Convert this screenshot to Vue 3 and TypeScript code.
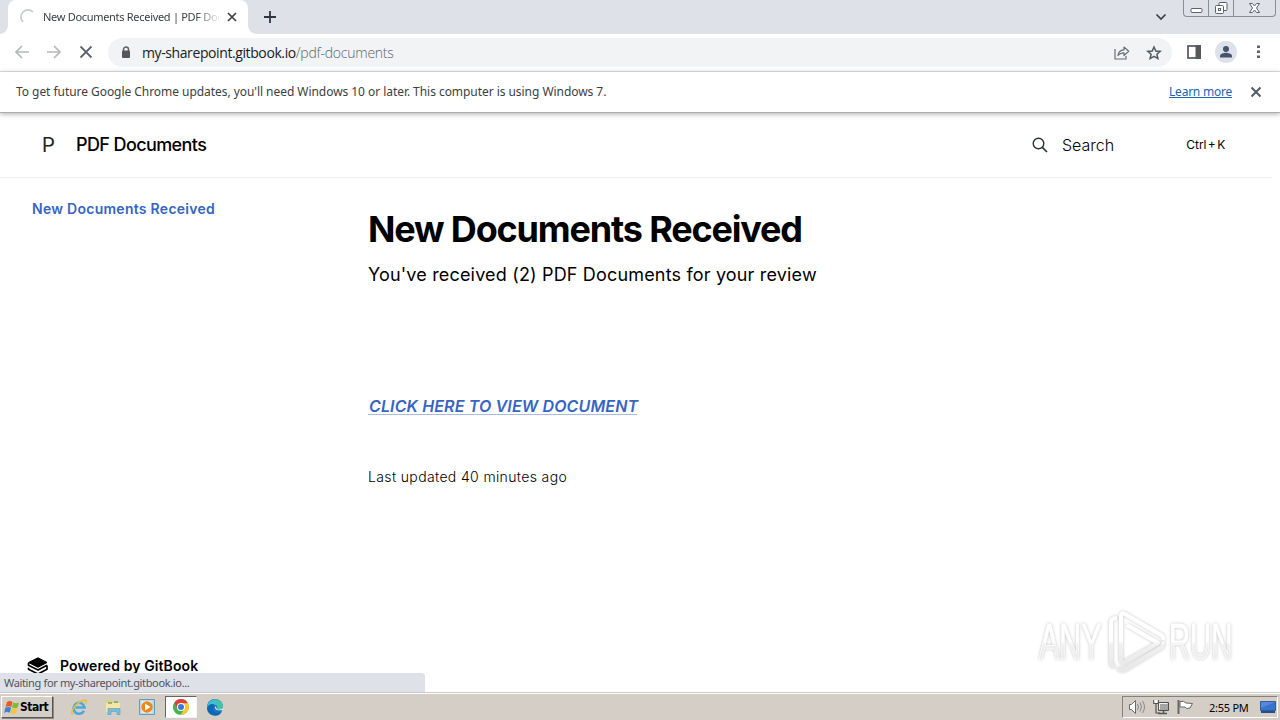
<script setup lang="ts">
interface Banner {
  message: string
  link: string
}

const tabTitle = 'New Documents Received | PDF Doc'
const banner: Banner = {
  message: "To get future Google Chrome updates, you'll need Windows 10 or later. This computer is using Windows 7.",
  link: 'Learn more',
}
const clock = '2:55 PM'
</script>

<template>
  <div class="screen">
    <header class="tabstrip">
      <div class="tab">
        <svg class="spinner" width="16" height="16" viewBox="0 0 16 16"><path d="M3 13A7 7 0 0 1 13 3" fill="none" stroke="#c3cbd8" stroke-width="1.7" /></svg>
        <span class="tab-title">{{ tabTitle }}</span>
        <svg width="10" height="10" viewBox="0 0 10 10"><path d="M1 1l8 8M9 1L1 9" stroke="#3c4043" stroke-width="1.7" /></svg>
        <i class="flare left"></i><i class="flare right"></i>
      </div>
      <svg class="plus" width="12" height="12" viewBox="0 0 12 12"><path d="M6 0v12M0 6h12" stroke="#303640" stroke-width="1.8" /></svg>
      <svg class="chevron" width="12" height="8" viewBox="0 0 12 8"><path d="M1.5 1.5L6 6l4.500-4.500" fill="none" stroke="#3c4043" stroke-width="1.7" /></svg>
      <div class="winbuttons">
        <span class="wb"><svg width="13" height="16" viewBox="0 0 13 16"><rect x="1" y="8.500" width="11" height="4" rx="1" fill="#fff" stroke="#5d6168" /></svg></span>
        <span class="wb"><svg width="15" height="16" viewBox="0 0 15 16"><rect x="5" y="2.500" width="8" height="8" rx="1" fill="#fff" stroke="#5d6168" /><rect x="1.500" y="5.500" width="8" height="8" rx="1" fill="#fff" stroke="#5d6168" /><rect x="4.500" y="8.500" width="2" height="2" fill="none" stroke="#5d6168" /></svg></span>
        <span class="wb wide"><svg width="13" height="16" viewBox="0 0 13 16"><path d="M1.500 3.500H4.500l2 2.500 2-2.500h3L8.500 8l3 4.500h-3L6.500 10l-2 2.500H1.500L4.500 8z" fill="#fff" stroke="#5d6168" /></svg></span>
      </div>
    </header>

    <div class="toolbar">
      <svg class="nav back" width="16" height="14" viewBox="0 0 16 14"><path d="M15 7H2M8 1L2 7l6 6" fill="none" stroke="#b6b8ba" stroke-width="1.7" /></svg>
      <svg class="nav fwd" width="16" height="14" viewBox="0 0 16 14"><path d="M1 7h13M8 1l6 6-6 6" fill="none" stroke="#b6b8ba" stroke-width="1.7" /></svg>
      <svg class="nav stop" width="14" height="14" viewBox="0 0 14 14"><path d="M1.500 1.500l11 11M12.500 1.500l-11 11" stroke="#5f6368" stroke-width="1.8" /></svg>
      <div class="omnibox">
        <svg class="lock" width="10" height="13" viewBox="0 0 10 13"><path d="M2.500 5.500V3.500a2.500 2.500 0 0 1 5 0v2" fill="none" stroke="#5f6368" stroke-width="1.500" /><rect x="1" y="4.500" width="8" height="7.500" rx="1" fill="#54585d" /></svg>
        <span class="url"><b>my-sharepoint.gitbook.io</b>/pdf-documents</span>
        <svg class="share" width="16" height="15" viewBox="0 0 16 15"><path d="M1 4v10h11v-3" fill="none" stroke="#6a6e73" stroke-width="1.200" /><path d="M4 10.500c.3-3.500 2.500-5.500 6-5.700V2l4.700 4.300L10 10.500V7.800c-2.500 0-4.500.8-6 2.700z" fill="none" stroke="#6a6e73" stroke-width="1.200" stroke-linejoin="round" /></svg>
        <svg class="star" width="16" height="16" viewBox="0 0 16 16"><path d="M8 2l1.800 4 4.400.4-3.300 2.900 1 4.300L8 11.400l-3.900 2.200 1-4.300-3.300-2.900L6.200 6z" fill="none" stroke="#54585d" stroke-width="1.500" /></svg>
      </div>
      <svg class="panel" width="14" height="14" viewBox="0 0 14 14"><rect x="1" y="1" width="12" height="12" fill="#fff" stroke="#55585c" stroke-width="1.700" /><path d="M8.500 0H14v14H8.500z" fill="#55585c" /></svg>
      <svg class="avatar" width="22" height="22" viewBox="0 0 22 22"><circle cx="11" cy="11" r="11" fill="#dde1e8" /><circle cx="11" cy="8" r="3" fill="#46536c" /><path d="M5 16.500v-1.800c0-2 4-3 6-3s6 1 6 3v1.800z" fill="#46536c" /></svg>
      <svg class="dots" width="3" height="14" viewBox="0 0 3 14"><path d="M0 .5h3v2.600H0zM0 5.500h3v2.600H0zM0 10.500h3v2.600H0z" fill="#5f6368" /></svg>
    </div>

    <div class="banner">
      <span class="banner-text">{{ banner.message }}</span>
      <a class="learn">{{ banner.link }}</a>
      <svg width="12" height="12" viewBox="0 0 12 12"><path d="M1.500 1.500l9 9M10.500 1.500l-9 9" stroke="#55595e" stroke-width="1.900" /></svg>
    </div>

    <main class="page">
      <div class="site-header">
        <span class="logo">P</span>
        <span class="site-title">PDF Documents</span>
        <div class="search">
          <svg width="16" height="16" viewBox="0 0 16 16"><circle cx="6.500" cy="6.500" r="5.300" fill="none" stroke="#2d3033" stroke-width="1.400" /><path d="M10.400 10.400L15 15" stroke="#2d3033" stroke-width="1.600" /></svg>
          <span class="search-label">Search</span>
          <kbd>Ctrl + K</kbd>
        </div>
      </div>
      <div class="columns">
        <nav class="sidebar">
          <a class="current">New Documents Received</a>
          <div class="powered">
            <svg width="22" height="18" viewBox="0 0 22 18"><path d="M1.500 5.500L11 .8l9 4.700L11 10.300z" fill="#000" stroke="#000" stroke-linejoin="round" /><path d="M1.500 6v2.300L11 13l9-4.700" fill="none" stroke="#000" stroke-width="1.700" stroke-linejoin="round" /><path d="M1.500 10.700v1.600L11 17l9-4.700V8.500" fill="none" stroke="#000" stroke-width="1.700" stroke-linejoin="round" /></svg>
            <span>Powered by GitBook</span>
          </div>
        </nav>
        <article class="doc">
          <h1>New Documents Received</h1>
          <p class="lead">You've received (2) PDF Documents for your review</p>
          <a class="cta">CLICK HERE TO VIEW DOCUMENT</a>
          <p class="updated">Last updated 40 minutes ago</p>
        </article>
      </div>
    </main>

    <footer class="taskbar">
      <div class="start">
        <svg width="16" height="15" viewBox="0 0 16 15"><path d="M3 2q3-1.800 5.500 0L7.300 7Q4.500 5.500 1.500 7z" fill="#e65a28" /><path d="M9.200 2.400q3 1.500 5.800 0l-1.300 5q-3 1.500-5.700 0z" fill="#7ebc37" /><path d="M1.300 7.700q3-1.400 5.800.1l-1.300 5q-3-1.500-5.600.1z" fill="#3b83cf" /><path d="M7.800 8.200q3 1.500 5.700.1l-1.300 4.900q-3 1.600-5.700 0z" fill="#f7c53b" /></svg>
        <span>Start</span>
      </div>
      <svg class="task" width="18" height="18" viewBox="0 0 18 18"><path d="M14 12.700A5.500 5.500 0 1 1 14.500 9.500H5.500" fill="none" stroke="#48a9df" stroke-width="2.600" /><path d="M3 16.500C-1 15 5 5.500 13 2.500c4-1.200 4 .7 2.500 3" fill="none" stroke="#e9bd36" stroke-width="1.500" /></svg>
      <svg class="task" width="18" height="18" viewBox="0 0 18 18"><path d="M2 2h5l1 2h7v10H2z" fill="#e8cf72" /><path d="M2 5h14v9H2z" fill="#f5e7a1" /><path d="M4 5h4M10 4h4" stroke="#68ad72" stroke-width="1.500" /><path d="M4 16.500V10.500h12v6h-3v-3H7v3z" fill="#79bce0" stroke="#519ac4" stroke-width=".6" /></svg>
      <svg class="task" width="18" height="18" viewBox="0 0 18 18"><path d="M1.500 1.500h15v15h-15z" fill="#b9d9ec" stroke="#679abd" /><path d="M3.500 3h10v12h-10z" fill="#e1eef5" /><circle cx="9" cy="9" r="5.700" fill="#ef8714" /><path d="M7 5.500L12.500 9 7 12.500z" fill="#fff" /></svg>
      <div class="active-task">
        <svg width="16" height="16" viewBox="0 0 16 16"><circle cx="8" cy="8" r="7.800" fill="#4daf50" /><path d="M8 8L1.200 4A7.800 7.800 0 0 1 14.900 4.300z" fill="#df4037" /><path d="M8 4.300h6.900A7.800 7.800 0 0 1 7.800 15.800L11.300 9.800z" fill="#f8c830" /><path d="M1.200 4L4.700 10 8 8V4.300z" fill="#df4037" /><path d="M1.200 4L4.700 10 8 12l-1.500 3.700A7.800 7.800 0 0 1 1.200 4z" fill="#4daf50" /><circle cx="8" cy="8" r="4" fill="#fff" /><circle cx="8" cy="8" r="3" fill="#3978dc" /></svg>
      </div>
      <svg class="task" width="18" height="18" viewBox="0 0 18 18"><circle cx="9" cy="9" r="8" fill="#1478c4" /><path d="M1.200 8A8 8 0 0 1 17 8.500c0 3-3.500 4-6 2.500 1.200-2.500 0-4-2.500-4S3 7 1.200 11z" fill="#40bfd0" /><path d="M8 1A8 8 0 0 1 17 8.500c0 3-3.500 4-6 2.500 1-4 0-8-3-10z" fill="#4cc58b" opacity=".65" /><path d="M1 10c1-4 6-5 8-3-3 1-3 6 1 7.500 2 .8 4 0 6-1A8 8 0 0 1 1 10z" fill="#0f68b5" /><path d="M9.500 8C8 10 9.500 13.500 17 12l1-2.500q-4 3-7 1.500z" fill="#e3dfd9" /></svg>
      <div class="tray">
        <svg width="18" height="16" viewBox="0 0 18 16"><path d="M1.500 5.500h2L7.500 1.500v13l-4-4h-2z" fill="#fff" stroke="#696969" /><path d="M9.500 5q2 3 0 6M12 3.500q3 4.500 0 9M14.500 2q4 6 0 12" fill="none" stroke="#888" /></svg>
        <svg width="17" height="16" viewBox="0 0 17 16"><path d="M5.500 3.500h10v8h-10z" fill="#a5a5a2" stroke="#505050" /><path d="M6.500 10.500v-6h8" fill="none" stroke="#f4f4f4" /><path d="M5 14.500h9M10.500 12v2" stroke="#555" stroke-width="1.500" /><path d="M.8 1v3.500h4.500V1M3 4.500v9.500h4" fill="none" stroke="#555" stroke-width="1.200" /><path d="M1.500 1h3v3h-3z" fill="#fff" /></svg>
        <svg width="17" height="16" viewBox="0 0 17 16"><path d="M1.500 1v14" stroke="#666" stroke-width="2" /><path d="M3 2.500q4-1 6 1.500L15.500 4.500 13 9q-4 1.500-5-1H3z" fill="#fff" stroke="#666" /></svg>
        <time>{{ clock }}</time>
        <svg class="desktop" width="16" height="14" viewBox="0 0 16 14"><path d="M.5 1.500h15v9H.5z" fill="#3973d0" stroke="#315d9c" /><path d="M1 2h14L1 8z" fill="#5588dd" /><path d="M1 12h14" stroke="#244f8c" stroke-width="2" /></svg>
      </div>
    </footer>

    <div class="status">Waiting for my-sharepoint.gitbook.io...</div>
    <svg class="watermark" width="216" height="78" viewBox="0 0 216 78">
      <defs>
        <linearGradient id="fade" x1="0" y1="0" x2="0" y2="1"><stop offset=".5" stop-color="#fff" /><stop offset=".56" stop-color="#f0f0f0" /><stop offset="1" stop-color="#e8e8e8" /></linearGradient>
        <linearGradient id="mark" gradientUnits="userSpaceOnUse" x1="0" y1="8" x2="0" y2="70"><stop offset=".5" stop-color="#fff" /><stop offset=".56" stop-color="#f0f0f0" /><stop offset="1" stop-color="#e8e8e8" /></linearGradient>
        <filter id="glow" x="-10%" y="-10%" width="120%" height="120%"><feDropShadow dx="0" dy="0" stdDeviation="1.700" flood-color="#777" flood-opacity=".48" /></filter>
      </defs>
      <g filter="url(#glow)">
        <text transform="translate(9 57) scale(.72 1.380)" textLength="87" lengthAdjust="spacingAndGlyphs" fill="url(#fade)">ANY</text>
        <text transform="translate(139 57) scale(.72 1.380)" textLength="88" lengthAdjust="spacingAndGlyphs" fill="url(#fade)">RUN</text>
        <path d="M87 16q-6 0-6 5v39q0 4 4 4" fill="none" stroke="url(#mark)" stroke-width="4" />
        <path d="M91 60V14q0-4 4-2l36 21q3 2 2 5" fill="none" stroke="url(#mark)" stroke-width="4" />
        <path d="M97 23l31 18-37 21M88 66q3 4 8 1l36-22q2-3 0-5" fill="none" stroke="url(#mark)" stroke-width="4" stroke-linejoin="round" />
      </g>
    </svg>
  </div>
</template>

<style>
html, body { overflow: hidden; }
</style>

<style scoped>
* { box-sizing: border-box; }
.screen { position: relative; width: 1280px; height: 720px; display: flex; flex-direction: column; background: #fff; overflow: hidden; font-family: "Noto Sans", sans-serif; }
svg { display: block; flex: none; }
.tabstrip { height: 34px; flex: none; display: flex; background: #dee1e8; }
.tab { position: relative; margin-left: 8px; width: 240px; height: 34px; background: #fff; border-radius: 8px 8px 0 0; display: flex; align-items: center; padding-left: 12px; }
.tab-title { margin-left: 7px; width: 176px; margin-right: 8px; padding-bottom: 2px; font-size: 11px; letter-spacing: -0.3px; white-space: nowrap; color: #3c4043; -webkit-mask-image: linear-gradient(90deg, #000 152px, transparent 178px); mask-image: linear-gradient(90deg, #000 152px, transparent 178px); }
.flare { position: absolute; bottom: 0; width: 8px; height: 8px; }
.flare.left { left: -8px; background: radial-gradient(circle at 0 0, #dee1e8 7.5px, #fff 8px); }
.flare.right { right: -8px; background: radial-gradient(circle at 100% 0, #dee1e8 7.5px, #fff 8px); }
.plus { margin: 11px 0 0 16px; }
.chevron { margin: 13px 16px 0 auto; }
.winbuttons { width: 93px; height: 17px; margin-right: 4px; display: flex; border: 1px solid #888d96; border-top: 0; border-radius: 0 0 4px 4px; }
.wb { width: 25px; display: flex; justify-content: center; border-right: 1px solid #888d96; }
.wb.wide { flex: 1; border: 0; }
.toolbar { height: 38px; flex: none; display: flex; align-items: center; border-bottom: 1px solid #dadce0; padding-left: 14px; }
.toolbar > svg { margin-bottom: 1px; }
.nav.fwd { margin-left: 16px; }
.nav.stop { margin-left: 17px; }
.omnibox { width: 1064px; height: 29px; border-radius: 15px; background: #f1f3f4; margin-left: 15px; display: flex; align-items: center; padding-left: 13px; }
.url { margin-left: 11px; font: 300 14px "Open Sans", sans-serif; letter-spacing: -0.24px; color: #5f6368; white-space: nowrap; }
.url b { font-weight: 400; color: #202124; letter-spacing: -0.4px; }
.share { margin-left: auto; }
.star { margin: 0 10px 0 16px; }
.panel { margin-left: 15px; }
.avatar { margin-left: 14px; }
.dots { margin-left: 20px; }
.banner { position: relative; z-index: 1; height: 41px; flex: none; display: flex; align-items: center; padding: 0 18px 0 16px; background: #fff; border-bottom: 1px solid #adadad; box-shadow: 0 1px 5px #aaa; font-size: 12px; color: #3c4043; }
.banner-text, .learn { padding-bottom: 1px; }
.banner-text { white-space: nowrap; letter-spacing: -0.05px; }
.learn { margin-left: auto; margin-right: 18px; color: #1967b5; text-decoration: underline; letter-spacing: -0.23px; }
.page { height: 579px; display: flex; flex-direction: column; font-family: Inter, sans-serif; color: #000; }
.site-header { width: 1272px; height: 65px; flex: none; border-bottom: 1px solid #eee; display: flex; align-items: center; padding: 0 0 1px 42px; }
.logo { width: 34px; font: 20px Roboto, sans-serif; color: #222; }
.site-title { font-size: 18px; font-weight: 500; letter-spacing: -0.6px; }
.search { margin-left: auto; width: 240px; display: flex; align-items: center; }
.search-label { margin-left: 14px; padding-top: 1px; font-size: 16px; font-weight: 300; }
kbd { margin-left: 72px; font: 12px Inter, sans-serif; white-space: nowrap; word-spacing: -2px; }
.columns { display: flex; flex: 1; }
.sidebar { width: 368px; display: flex; flex-direction: column; justify-content: space-between; padding: 22px 0 16px 32px; }
.current { color: #3664c2; font-size: 14px; line-height: 18px; font-weight: 600; letter-spacing: 0.27px; }
.powered { margin-left: -5px; display: flex; align-items: center; gap: 11px; font-size: 14px; line-height: 20px; font-weight: 600; letter-spacing: 0.1px; }
.doc { padding-top: 29px; }
h1 { margin: 0; font-size: 36px; line-height: 45px; font-weight: 700; letter-spacing: -1.17px; white-space: nowrap; }
.lead { margin: 9px 0 0; font-size: 18px; line-height: 28px; letter-spacing: 0.17px; white-space: nowrap; }
.cta { display: block; width: 269px; margin: 108px 0 0; padding-left: 1px; height: 18px; line-height: 18px; font-size: 16px; font-style: italic; font-weight: 600; color: #3664c2; border-bottom: 1px solid #a7bce2; white-space: nowrap; letter-spacing: 0.14px; }
.updated { margin: 52px 0 0; font-size: 14px; line-height: 20px; font-weight: 300; letter-spacing: 0.36px; }
.taskbar { height: 28px; margin-top: auto; flex: none; background: #d5cec7; border-top: 1px solid #c9c9c6; box-shadow: inset 0 1px #fff; display: flex; align-items: center; padding: 1px 0 0 1px; }
.start { width: 52px; height: 22px; display: flex; align-items: center; gap: 0; padding-left: 2px; border: 1px solid #fff; border-right-color: #555; border-bottom-color: #555; box-shadow: 1px 1px #8e8a83; font: 700 12px "DejaVu Sans Condensed", "DejaVu Sans", sans-serif; letter-spacing: -0.5px; }
.task { margin-left: 16px; }
.start + .task { margin-left: 17px; }
.active-task { width: 32px; height: 22px; margin-left: 9px; margin-right: -7px; display: flex; align-items: center; justify-content: center; background: #fff; border: 1px solid #656565; border-right-color: #f4f4f4; border-bottom-color: #f4f4f4; }
.tray { margin-left: auto; margin-right: 2px; width: 156px; height: 22px; border: 1px solid #85817b; border-right-color: #fff; border-bottom-color: #fff; display: flex; align-items: center; gap: 7px; padding-left: 5px; }
time { margin-left: 8px; width: 42px; font-size: 11px; letter-spacing: -0.25px; white-space: nowrap; }
.desktop { margin-left: 2px; }
.status { position: absolute; left: 0; top: 673px; width: 425px; height: 19px; padding-left: 4px; background: #dee1e8; border-top-right-radius: 4px; font-size: 11px; line-height: 20px; letter-spacing: -0.35px; color: #50545a; }
.watermark { position: absolute; left: 1030px; top: 602px; }
.watermark text { font: 400 36px "Liberation Sans", sans-serif; stroke: #fff; stroke-width: .5px; }
</style>
